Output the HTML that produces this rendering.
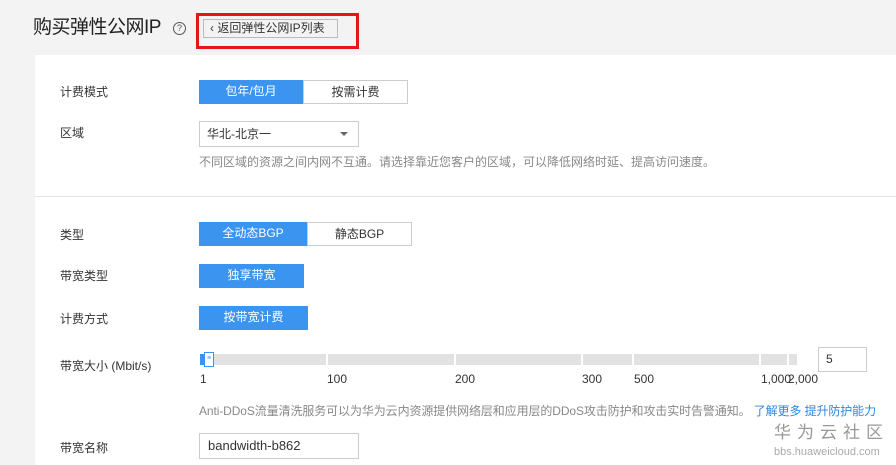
<!DOCTYPE html><html><head><meta charset="utf-8"><style>
body{margin:0;width:896px;height:465px;background:#f3f3f3;font-family:"Liberation Sans","Noto Sans CJK SC",sans-serif;font-size:12px;color:#333;position:relative;overflow:hidden}
.a{position:absolute;line-height:1.2}
.panel{left:35px;top:55px;width:861px;height:410px;background:#fff}
.lbl{left:60px;font-size:12px;color:#333}
.btn{position:absolute;height:24px;line-height:23px;text-align:center;font-size:12px;box-sizing:border-box}
.on{background:#3b94f0;color:#fff}
.off{background:#fff;border:1px solid #ccc;color:#333}
.seg{position:absolute;top:354px;height:11px;background:#e2e2e2}
.tk{position:absolute;top:372px;font-size:12px;color:#333}
</style></head><body>
<div class="a" style="left:33px;top:17px;font-size:19px;color:#222;letter-spacing:-0.5px">购买弹性公网IP</div>
<div class="a" style="left:173px;top:22px;width:11px;height:11px;border:1px solid #555;border-radius:50%;font-size:9px;line-height:11px;text-align:center;color:#555">?</div>
<div class="a" style="left:196px;top:13px;width:163px;height:36px;border:3px solid #e8141b;box-sizing:border-box"></div>
<div class="a" style="left:203px;top:19px;width:135px;height:19px;border:1px solid #bbb;background:#f3f3f3;box-sizing:border-box;font-size:12px;line-height:16px;padding-left:6px;color:#333">‹ 返回弹性公网IP列表</div>
<div class="a panel"></div>
<div class="a" style="left:35px;top:196px;width:861px;height:1px;background:#e5e5e5"></div>
<div class="a lbl" style="top:85px">计费模式</div>
<div class="btn on" style="left:199px;top:80px;width:104px">包年/包月</div>
<div class="btn off" style="left:303px;top:80px;width:105px">按需计费</div>
<div class="a lbl" style="top:126px">区域</div>
<div class="a" style="left:199px;top:121px;width:160px;height:26px;border:1px solid #ccc;box-sizing:border-box;line-height:24px;padding-left:7px">华北-北京一<span style="position:absolute;right:10px;top:10px;border:4px solid transparent;border-top:4px solid #666"></span></div>
<div class="a" style="left:199px;top:155px;color:#888">不同区域的资源之间内网不互通。请选择靠近您客户的区域，可以降低网络时延、提高访问速度。</div>
<div class="a lbl" style="top:228px">类型</div>
<div class="btn on" style="left:199px;top:222px;width:108px">全动态BGP</div>
<div class="btn off" style="left:307px;top:222px;width:105px">静态BGP</div>
<div class="a lbl" style="top:269px">带宽类型</div>
<div class="btn on" style="left:199px;top:264px;width:105px">独享带宽</div>
<div class="a lbl" style="top:312px">计费方式</div>
<div class="btn on" style="left:199px;top:306px;width:109px">按带宽计费</div>
<div class="a lbl" style="top:359px">带宽大小 (Mbit/s)</div>
<div class="seg" style="left:200px;width:126px"></div>
<div class="seg" style="left:328px;width:126px"></div>
<div class="seg" style="left:456px;width:125px"></div>
<div class="seg" style="left:583px;width:49px"></div>
<div class="seg" style="left:634px;width:125px"></div>
<div class="seg" style="left:761px;width:26px"></div>
<div class="seg" style="left:789px;width:8px"></div>
<div class="a" style="left:200px;top:354px;width:5px;height:11px;background:#3b94f0"></div>
<div class="a" style="left:204px;top:352px;width:10px;height:15px;border:1px solid #3b94f0;background:#fff;box-sizing:border-box;font-size:7px;line-height:12px;text-align:center;color:#3b94f0">≡</div>
<div class="tk" style="left:200px">1</div><div class="tk" style="left:327px">100</div><div class="tk" style="left:455px">200</div><div class="tk" style="left:582px">300</div><div class="tk" style="left:634px">500</div><div class="tk" style="left:761px">1,000</div><div class="tk" style="left:788px">2,000</div>
<div class="a" style="left:818px;top:347px;width:49px;height:25px;border:1px solid #ccc;box-sizing:border-box;line-height:23px;padding-left:7px">5</div>
<div class="a" style="left:199px;top:404px;color:#888;letter-spacing:-0.1px">Anti-DDoS流量清洗服务可以为华为云内资源提供网络层和应用层的DDoS攻击防护和攻击实时告警通知。 <span style="color:#2e87e0">了解更多 提升防护能力</span></div>
<div class="a lbl" style="top:441px">带宽名称</div>
<div class="a" style="left:199px;top:433px;width:160px;height:26px;border:1px solid #ccc;box-sizing:border-box;line-height:24px;padding-left:8px;font-size:13px">bandwidth-b862</div>
<div class="a" style="left:774px;top:423px;font-size:17px;color:#999;letter-spacing:6px">华为云社区</div>
<div class="a" style="left:774px;top:446px;font-size:11px;color:#aaa">bbs.huaweicloud.com</div>
</body></html>
